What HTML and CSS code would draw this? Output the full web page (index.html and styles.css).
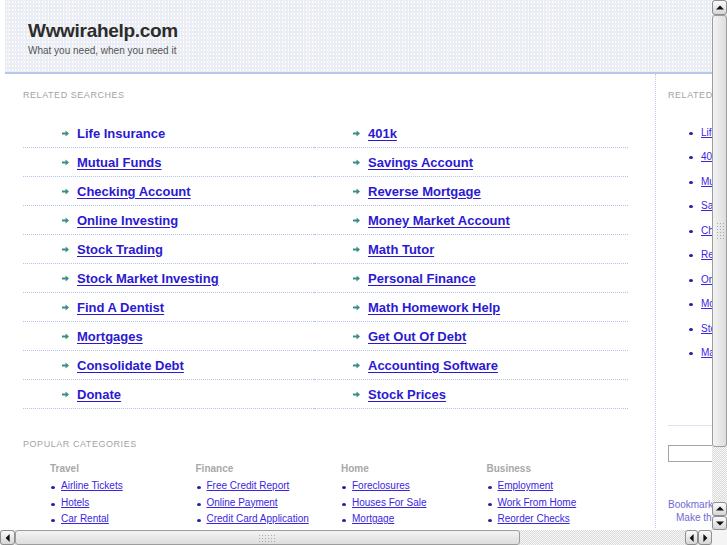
FILE: index.html
```html
<!DOCTYPE html>
<html>
<head>
<meta charset="utf-8">
<title>Wwwirahelp.com</title>
<link rel="stylesheet" href="styles.css">
</head>
<body>
<div class="page">
  <header class="header">
    <h1 class="title">Wwwirahelp.com</h1>
    <p class="tagline">What you need, when you need it</p>
  </header>
  <div class="content">
    <main class="main">
      <h2 class="label">Related Searches</h2>
      <ul class="searches">
        <li><svg class="arrow" viewBox="0 0 7 7"><path d="M0 2.6h3.6V0.6L7 3.5 3.6 6.4V4.4H0z"/></svg><a class="plain">Life Insurance</a></li>
        <li><svg class="arrow" viewBox="0 0 7 7"><path d="M0 2.6h3.6V0.6L7 3.5 3.6 6.4V4.4H0z"/></svg><a>401k</a></li>
        <li><svg class="arrow" viewBox="0 0 7 7"><path d="M0 2.6h3.6V0.6L7 3.5 3.6 6.4V4.4H0z"/></svg><a>Mutual Funds</a></li>
        <li><svg class="arrow" viewBox="0 0 7 7"><path d="M0 2.6h3.6V0.6L7 3.5 3.6 6.4V4.4H0z"/></svg><a>Savings Account</a></li>
        <li><svg class="arrow" viewBox="0 0 7 7"><path d="M0 2.6h3.6V0.6L7 3.5 3.6 6.4V4.4H0z"/></svg><a>Checking Account</a></li>
        <li><svg class="arrow" viewBox="0 0 7 7"><path d="M0 2.6h3.6V0.6L7 3.5 3.6 6.4V4.4H0z"/></svg><a>Reverse Mortgage</a></li>
        <li><svg class="arrow" viewBox="0 0 7 7"><path d="M0 2.6h3.6V0.6L7 3.5 3.6 6.4V4.4H0z"/></svg><a>Online Investing</a></li>
        <li><svg class="arrow" viewBox="0 0 7 7"><path d="M0 2.6h3.6V0.6L7 3.5 3.6 6.4V4.4H0z"/></svg><a>Money Market Account</a></li>
        <li><svg class="arrow" viewBox="0 0 7 7"><path d="M0 2.6h3.6V0.6L7 3.5 3.6 6.4V4.4H0z"/></svg><a>Stock Trading</a></li>
        <li><svg class="arrow" viewBox="0 0 7 7"><path d="M0 2.6h3.6V0.6L7 3.5 3.6 6.4V4.4H0z"/></svg><a>Math Tutor</a></li>
        <li><svg class="arrow" viewBox="0 0 7 7"><path d="M0 2.6h3.6V0.6L7 3.5 3.6 6.4V4.4H0z"/></svg><a>Stock Market Investing</a></li>
        <li><svg class="arrow" viewBox="0 0 7 7"><path d="M0 2.6h3.6V0.6L7 3.5 3.6 6.4V4.4H0z"/></svg><a>Personal Finance</a></li>
        <li><svg class="arrow" viewBox="0 0 7 7"><path d="M0 2.6h3.6V0.6L7 3.5 3.6 6.4V4.4H0z"/></svg><a>Find A Dentist</a></li>
        <li><svg class="arrow" viewBox="0 0 7 7"><path d="M0 2.6h3.6V0.6L7 3.5 3.6 6.4V4.4H0z"/></svg><a>Math Homework Help</a></li>
        <li><svg class="arrow" viewBox="0 0 7 7"><path d="M0 2.6h3.6V0.6L7 3.5 3.6 6.4V4.4H0z"/></svg><a>Mortgages</a></li>
        <li><svg class="arrow" viewBox="0 0 7 7"><path d="M0 2.6h3.6V0.6L7 3.5 3.6 6.4V4.4H0z"/></svg><a>Get Out Of Debt</a></li>
        <li><svg class="arrow" viewBox="0 0 7 7"><path d="M0 2.6h3.6V0.6L7 3.5 3.6 6.4V4.4H0z"/></svg><a>Consolidate Debt</a></li>
        <li><svg class="arrow" viewBox="0 0 7 7"><path d="M0 2.6h3.6V0.6L7 3.5 3.6 6.4V4.4H0z"/></svg><a>Accounting Software</a></li>
        <li><svg class="arrow" viewBox="0 0 7 7"><path d="M0 2.6h3.6V0.6L7 3.5 3.6 6.4V4.4H0z"/></svg><a>Donate</a></li>
        <li><svg class="arrow" viewBox="0 0 7 7"><path d="M0 2.6h3.6V0.6L7 3.5 3.6 6.4V4.4H0z"/></svg><a>Stock Prices</a></li>
      </ul>
      <h2 class="label label-pop">Popular Categories</h2>
      <div class="cats">
        <div class="cat">
          <h3>Travel</h3>
          <ul>
            <li><a>Airline Tickets</a></li>
            <li><a>Hotels</a></li>
            <li><a>Car Rental</a></li>
          </ul>
        </div>
        <div class="cat">
          <h3>Finance</h3>
          <ul>
            <li><a>Free Credit Report</a></li>
            <li><a>Online Payment</a></li>
            <li><a>Credit Card Application</a></li>
          </ul>
        </div>
        <div class="cat">
          <h3>Home</h3>
          <ul>
            <li><a>Foreclosures</a></li>
            <li><a>Houses For Sale</a></li>
            <li><a>Mortgage</a></li>
          </ul>
        </div>
        <div class="cat">
          <h3>Business</h3>
          <ul>
            <li><a>Employment</a></li>
            <li><a>Work From Home</a></li>
            <li><a>Reorder Checks</a></li>
          </ul>
        </div>
      </div>
    </main>
    <aside class="side">
      <h2 class="label">Related Searches</h2>
      <ul class="side-list">
        <li><a>Life Insurance</a></li>
        <li><a>401k</a></li>
        <li><a>Mutual Funds</a></li>
        <li><a>Savings Account</a></li>
        <li><a>Checking Account</a></li>
        <li><a>Reverse Mortgage</a></li>
        <li><a>Online Investing</a></li>
        <li><a>Money Market Account</a></li>
        <li><a>Stock Trading</a></li>
        <li><a>Math Tutor</a></li>
      </ul>
      <hr class="side-rule">
      <input class="search" type="text">
      <p class="bm bm-1">Bookmark this page</p>
      <p class="bm bm-2">Make this your homepage</p>
    </aside>
  </div>
</div>

<div class="vscroll">
  <div class="sb-btn sb-up v-top"></div>
  <div class="v-thumb"><span class="grip grip-v"></span></div>
  <div class="sb-btn sb-up v-up2"></div>
  <div class="sb-btn sb-down v-down"></div>
</div>
<div class="hscroll">
  <div class="sb-btn sb-left h-left"></div>
  <div class="h-thumb"><span class="grip grip-h"></span></div>
  <div class="sb-btn sb-left h-left2"></div>
  <div class="sb-btn sb-right h-right"></div>
</div>
<div class="corner"></div>
</body>
</html>
```

FILE: styles.css
```css
html, body {
  margin: 0;
  padding: 0;
  background: #fff;
  overflow: hidden;
}
body {
  font-family: "Liberation Sans", Arial, sans-serif;
}
.page {
  width: 940px;
  padding-left: 5px;
}
ul {
  list-style: none;
  margin: 0;
  padding: 0;
}

/* header */
.header {
  height: 74px;
  box-sizing: border-box;
  padding: 21px 0 0 23px;
  border-bottom: 2px solid #b6c8ea;
  background-color: #eaedf3;
  background-image:
    radial-gradient(circle, #ffffff 0.55px, transparent 0.8px),
    radial-gradient(circle, #f7f8fb 0.55px, transparent 0.8px);
  background-size: 3px 4px, 5px 3px;
  background-position: 0 0, 1px 2px;
}
.title {
  margin: 0;
  font-size: 19px;
  line-height: 19px;
  font-weight: bold;
  color: #2c2c2c;
  letter-spacing: -0.3px;
}
.tagline {
  margin: 5px 0 0;
  font-size: 10px;
  line-height: 11px;
  color: #555;
}

/* content */
.content {
  display: flex;
}
.main {
  width: 632px;
  padding: 15px 0 0 18px;
  border-right: 1px dotted #c4cdee;
}
.label {
  margin: 0;
  font-size: 9px;
  line-height: 12px;
  font-weight: normal;
  text-transform: uppercase;
  letter-spacing: 0.55px;
  color: #a3a3a3;
  white-space: nowrap;
}
.searches {
  margin-top: 18px;
  width: 605px;
  display: grid;
  grid-template-columns: 291px 314px;
}
.searches li {
  height: 28px;
  border-bottom: 1px dotted #b3c4ea;
  display: flex;
  align-items: center;
  padding-left: 39px;
  gap: 8px;
}
.arrow {
  width: 7px;
  height: 7px;
  fill: #3a8d84;
  flex: none;
}
.searches a {
  font-size: 13px;
  font-weight: bold;
  color: #2b19d2;
  text-decoration: underline;
  text-underline-offset: 2px;
}
.searches a.plain {
  text-decoration: none;
}
.label-pop {
  margin-top: 29px;
}
.cats {
  margin-top: 13px;
  padding-left: 27px;
  display: grid;
  grid-template-columns: repeat(4, 145.5px);
}
.cat h3 {
  margin: 0 0 3px;
  font-size: 10px;
  line-height: 12px;
  font-weight: bold;
  color: #a8a8a8;
}
.cat li {
  position: relative;
  padding-left: 11px;
  line-height: 16.5px;
  font-size: 10px;
}
.cat li::before {
  content: "";
  position: absolute;
  left: 1px;
  top: 8px;
  width: 4px;
  height: 3px;
  border-radius: 50%;
  background: #22209a;
}
.cat a {
  color: #3a26e0;
  text-decoration: underline;
}

/* side */
.side {
  width: 44px;
  margin-top: 6px;
  padding: 9px 0 0 12px;
  overflow: hidden;
}
.side-list {
  margin-top: 19.75px;
}
.side-list li {
  position: relative;
  line-height: 24.5px;
  padding-left: 33px;
  font-size: 10px;
  white-space: nowrap;
}
.side-list li::before {
  content: "";
  position: absolute;
  left: 21px;
  top: 11px;
  width: 4px;
  height: 3px;
  border-radius: 50%;
  background: #22209a;
}
.side-list a {
  color: #3a26e0;
  text-decoration: underline;
}
.side-rule {
  margin: 59px 0 0;
  border: 0;
  border-top: 1px solid #dfe2f0;
  width: 220px;
}
.search {
  display: block;
  margin-top: 19px;
  width: 160px;
  height: 17px;
  box-sizing: border-box;
  border: 1px solid #a4a4a4;
  padding: 0;
}
.bm {
  margin: 0;
  font-size: 10px;
  line-height: 13px;
  color: #6e6ad2;
  white-space: nowrap;
}
.bm-1 {
  margin-top: 36.5px;
}
.bm-2 {
  padding-left: 8px;
}

/* fake scrollbars */
.vscroll {
  position: fixed;
  left: 712px;
  top: 0;
  width: 15px;
  height: 530px;
  background-color: #f2f2f2;
  background-image: conic-gradient(#dcdcdc 25%, #f6f6f6 0 50%, #dcdcdc 0 75%, #f6f6f6 0);
  background-size: 2px 2px;
}
.hscroll {
  position: fixed;
  left: 0;
  top: 530px;
  width: 712px;
  height: 15px;
  background-color: #f2f2f2;
  background-image: conic-gradient(#dcdcdc 25%, #f6f6f6 0 50%, #dcdcdc 0 75%, #f6f6f6 0);
  background-size: 2px 2px;
}
.corner {
  position: fixed;
  left: 712px;
  top: 530px;
  width: 15px;
  height: 15px;
  background: #f4f4f4;
}
.sb-btn {
  position: absolute;
  box-sizing: border-box;
  border: 1px solid #8e8e8e;
  border-radius: 3px;
  background: linear-gradient(#fbfbfb, #d6d6d6);
}
.sb-btn::after {
  content: "";
  position: absolute;
  left: 50%;
  top: 50%;
  width: 0;
  height: 0;
  border-style: solid;
  border-color: transparent;
}
.sb-up::after {
  border-width: 0 4px 4px 4px;
  border-bottom-color: #111;
  transform: translate(-50%, -60%);
}
.sb-down::after {
  border-width: 4px 4px 0 4px;
  border-top-color: #111;
  transform: translate(-50%, -40%);
}
.sb-left::after {
  border-width: 4px 4px 4px 0;
  border-right-color: #111;
  transform: translate(-60%, -50%);
}
.sb-right::after {
  border-width: 4px 0 4px 4px;
  border-left-color: #111;
  transform: translate(-40%, -50%);
}
.v-top { left: 0; top: 0; width: 15px; height: 15px; }
.v-up2 { left: 0; top: 502px; width: 15px; height: 14px; }
.v-down { left: 0; top: 516px; width: 15px; height: 14px; }
.h-left { left: 0; top: 0; width: 15px; height: 15px; }
.h-left2 { left: 685px; top: 0; width: 13px; height: 15px; }
.h-right { left: 698px; top: 0; width: 14px; height: 15px; }

.v-thumb {
  position: absolute;
  left: 0;
  top: 15px;
  width: 15px;
  height: 432px;
  box-sizing: border-box;
  border: 1px solid #9d9d9d;
  border-radius: 3px;
  background: linear-gradient(to right, #f3f3f3, #dedede);
}
.h-thumb {
  position: absolute;
  left: 15px;
  top: 0;
  width: 505px;
  height: 15px;
  box-sizing: border-box;
  border: 1px solid #9d9d9d;
  border-radius: 3px;
  background: linear-gradient(#f3f3f3, #dedede);
}
.grip {
  position: absolute;
  background-image: radial-gradient(circle, #a8a8a8 0.7px, transparent 0.9px);
  background-size: 3px 3px;
}
.grip-v {
  left: 3px;
  top: 206px;
  width: 8px;
  height: 18px;
}
.grip-h {
  left: 242px;
  top: 3px;
  width: 18px;
  height: 8px;
}
```
